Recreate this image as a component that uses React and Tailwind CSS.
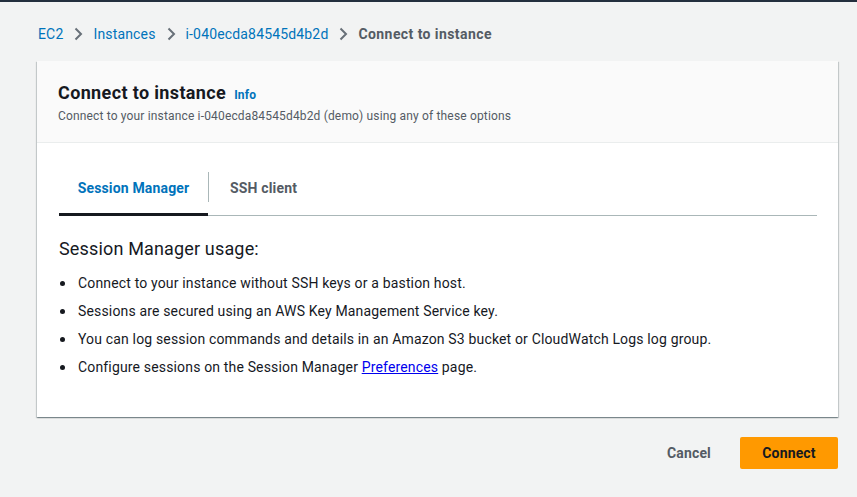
import React from 'react';

const Chevron = () => (
  <svg width="10" height="14" viewBox="0 0 10 14" className="mx-[10px] shrink-0">
    <path d="M2.5 1.5 L8 7 L2.5 12.5" fill="none" stroke="#687078" strokeWidth="2" />
  </svg>
);

const Dot = () => (
  <span className="w-[19px] shrink-0 flex items-center pl-[1px]">
    <span className="w-[5px] h-[5px] rounded-full bg-[#16191f]" />
  </span>
);

const bullets = [
  'Connect to your instance without SSH keys or a bastion host.',
  'Sessions are secured using an AWS Key Management Service key.',
  'You can log session commands and details in an Amazon S3 bucket or CloudWatch Logs log group.',
];

export default function App() {
  return (
    <div className="w-[857px] h-[497px] bg-[#f2f3f3] overflow-hidden tracking-[0.01em]" style={{ fontFamily: 'Roboto, "Noto Sans", sans-serif' }}>
      <div className="h-[2px] bg-[#232f3e]" />

      <nav className="flex items-center h-[20px] mt-[22px] pl-[38px] text-[14px]">
        <a className="text-[#0073bb]">EC2</a>
        <Chevron />
        <a className="text-[#0073bb]">Instances</a>
        <Chevron />
        <a className="text-[#0073bb]">i-040ecda84545d4b2d</a>
        <Chevron />
        <span className="text-[#545b64] font-bold tracking-[0.03em]">Connect to instance</span>
      </nav>

      <div className="ml-[37px] mt-[17px] w-[801px] h-[356px] bg-white shadow-[0_1px_1px_0_rgba(0,28,36,0.3),1px_1px_1px_0_rgba(0,28,36,0.15),-1px_1px_1px_0_rgba(0,28,36,0.15)] flex flex-col">
        <div className="h-[82px] bg-[#fafafa] border-b border-[#eaeded] px-[21px] pt-[21px]">
          <div className="flex items-baseline gap-[8px]">
            <h1 className="text-[18px] leading-[22px] font-bold text-[#16191f] tracking-[0.02em]">Connect to instance</h1>
            <a className="text-[12px] font-bold text-[#0073bb]">Info</a>
          </div>
          <p className="mt-[4px] text-[12px] leading-[16px] text-[#545b64]">
            Connect to your instance i-040ecda84545d4b2d (demo) using any of these options
          </p>
        </div>

        <div className="px-[22px] pt-[29px]">
          <div className="flex items-start border-b border-[#aab7b8] w-[758px]">
            <div className="relative w-[149px] h-[43px] flex items-start justify-center pt-[6px] text-[14px] leading-[20px] font-bold text-[#0073bb]">
              Session Manager
              <div className="absolute left-0 right-0 -bottom-px h-[3px] bg-[#16191f]" />
            </div>
            <div className="w-px h-[30px] bg-[#aab7b8]" />
            <div className="h-[43px] flex items-start pt-[6px] px-[21px] text-[14px] leading-[20px] font-bold text-[#545b64]">
              SSH client
            </div>
          </div>

          <h2 className="mt-[21px] text-[18px] leading-[24px] text-[#16191f]">Session Manager usage:</h2>

          <ul className="mt-[8px] text-[14px] leading-[28px] text-[#16191f]">
            {bullets.map((b) => (
              <li key={b} className="flex items-center">
                <Dot />
                <span>{b}</span>
              </li>
            ))}
            <li className="flex items-center">
              <Dot />
              <span>
                Configure sessions on the Session Manager{' '}
                <a className="text-[#0000ee] underline">Preferences</a> page.
              </span>
            </li>
          </ul>
        </div>
      </div>

      <div className="flex items-center justify-end w-[838px] mt-[20px] gap-[29px]">
        <button className="text-[14px] font-bold text-[#545b64]">Cancel</button>
        <button className="w-[98px] h-[32px] bg-[#ff9900] rounded-[2px] text-[14px] font-bold text-[#16191f]">
          Connect
        </button>
      </div>
    </div>
  );
}
